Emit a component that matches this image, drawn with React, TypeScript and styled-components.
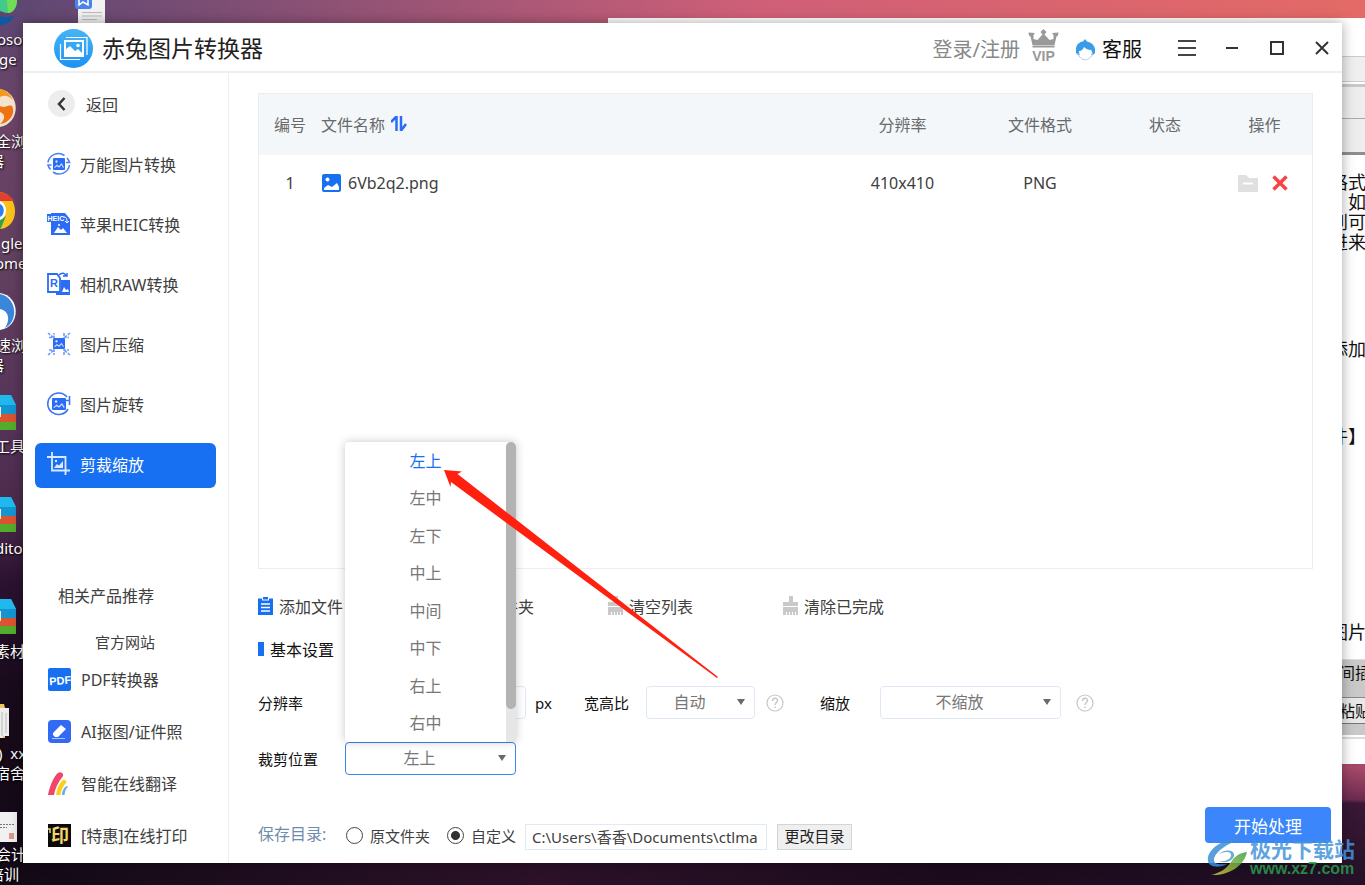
import React from "react";
import styled, { createGlobalStyle, css } from "styled-components";

const blue = "#1770f2";
const line = "#eeeff0";
const pale = "#dfe9f5";

const Global = createGlobalStyle`
  * { box-sizing: border-box; }
  body { margin: 0; }
  body, button, input, select {
    font-family: "Noto Sans", "Noto Sans CJK SC", sans-serif;
    font-size: 16px;
    color: #404040;
  }
  button { padding: 0; border: 0; background: none; cursor: pointer; }
  a { color: inherit; text-decoration: none; }
  svg { display: block; flex: none; }
`;

/* ---------- Desktop ---------- */

const Desktop = styled.div`
  position: relative;
  display: grid;
  min-height: 100vh;
  padding: 23px 23px 22px;
  overflow: hidden;
  background:
    linear-gradient(90deg, #51497400 0%, #cf5f78 55%, #e36a66 100%) top / 100% 24px no-repeat,
    linear-gradient(#a04468, #a84a6a 3%, #6d2a50 30%, #3a1836 33%, #241026) right bottom / 24px 122px no-repeat,
    linear-gradient(90deg, #120a16, #2c1128 40%, #1b0b1c 70%, #221026) bottom / 100% 22px no-repeat,
    linear-gradient(#5a4773 0%, #6c4468 12%, #62405f 30%, #553359 48%, #4b2a4b 58%, #2a1230 66%, #180b1b 78%, #130916 100%);
`;

const Shortcut = styled.div<{ $top: number; $left?: number }>`
  position: absolute;
  top: ${(p) => p.$top}px;
  left: ${(p) => p.$left ?? 0}px;
`;

const Caption = styled.span<{ $top: number; $left: number }>`
  position: absolute;
  top: ${(p) => p.$top - 11}px;
  left: ${(p) => p.$left}px;
  line-height: 20px;
  font-size: 15px;
  color: #fff;
  white-space: pre;
  text-shadow: 1px 1px 2px #000;
`;

/* ---------- Window behind ---------- */

const BackWindow = styled.div`
  position: absolute;
  top: 18px;
  left: 608px;
  right: 0;
  bottom: 121px;
  display: flex;
  flex-direction: column;
  align-items: flex-end;
  overflow: hidden;
  background: #fff;
`;

const Strip = styled.div<{ $h: number; $bg?: string; $edge?: string }>`
  flex: none;
  width: 36px;
  height: ${(p) => p.$h}px;
  background: ${(p) => p.$bg ?? "#fff"};
  border-bottom: ${(p) => p.$edge ?? "0 solid"};
`;

const Paper = styled(Strip)`
  padding-left: 1px;
  font-size: 18px;
  line-height: 20px;
  color: #111;
  white-space: pre;
  overflow: hidden;
`;

const SmallText = styled(Strip)`
  padding-left: 10px;
  font-size: 16px;
  line-height: 26px;
  color: #111;
  white-space: nowrap;
  overflow: hidden;
`;

/* ---------- Application window ---------- */

const Window = styled.div`
  position: relative;
  display: grid;
  grid-template-rows: 50px 1fr;
  min-width: 1180px;
  background: #fff;
  box-shadow: 0 0 12px rgba(0, 0, 0, 0.35);
`;

const TitleBar = styled.header`
  display: flex;
  align-items: center;
  padding: 2px 0 0 31px;
  border-bottom: 2px solid ${line};
`;

const AppTitle = styled.h1`
  margin: 0 auto 0 9px;
  font-size: 23px;
  line-height: 32px;
  font-weight: 400;
  color: #222;
`;

const Login = styled.button`
  margin-right: 8px;
  padding-top: 3px;
  font-size: 20px;
  line-height: 28px;
  color: #888;
`;

const Vip = styled.button`
  display: flex;
  flex-direction: column;
  align-items: center;
  width: 31px;
  margin: -6px 17px 0 0;
  font: 700 14px/12px "Liberation Sans", sans-serif;
  color: #999;
`;

const Service = styled.button`
  display: flex;
  align-items: center;
  gap: 7px;
  margin-right: 25px;
  padding-top: 3px;
  font-size: 20px;
  line-height: 28px;
  color: #111;
`;

const WindowButtons = styled.div`
  display: flex;
  gap: 5px;
`;

const WindowButton = styled.button`
  display: grid;
  place-items: center;
  width: 40px;
  height: 40px;
`;

const Body = styled.div`
  display: grid;
  grid-template-columns: 206px 1fr;
`;

/* ---------- Sidebar ---------- */

const Sidebar = styled.aside`
  display: flex;
  flex-direction: column;
  padding: 17px 12px 0;
  border-right: 1px solid ${line};
`;

const Back = styled.button`
  display: flex;
  align-items: center;
  gap: 11px;
  height: 27px;
  margin: 0 0 26px 13px;
`;

const BackCircle = styled.span`
  display: grid;
  place-items: center;
  width: 27px;
  height: 27px;
  border-radius: 50%;
  background: #ededed;
`;

const Nav = styled.nav`
  display: flex;
  flex-direction: column;
  gap: 15px;
`;

const NavItem = styled.button<{ $active?: boolean }>`
  display: flex;
  align-items: center;
  gap: 9px;
  height: 45px;
  padding: 0 0 3px 12px;
  border-radius: 6px;
  ${(p) => p.$active && css`background: ${blue}; color: #fff;`}
`;

const Related = styled.h2`
  margin: auto 0 23px 23px;
  font-size: 16px;
  line-height: 24px;
  font-weight: 400;
`;

const Site = styled.a`
  margin-left: 60px;
  font-size: 15px;
  line-height: 22px;
`;

const Products = styled.div`
  display: flex;
  flex-direction: column;
  padding-bottom: 2px;
`;

const Product = styled.a`
  display: flex;
  align-items: center;
  gap: 10px;
  height: 52px;
  padding-left: 13px;
  white-space: nowrap;
`;

/* ---------- Main pane ---------- */

const Main = styled.main`
  display: flex;
  flex-direction: column;
  min-width: 0;
  padding-top: 20px;
`;

const Work = styled.div`
  flex: 1;
  display: flex;
  flex-direction: column;
  padding: 0 29px;
`;

const FilePane = styled.div`
  flex: 1;
  min-height: 220px;
  border: 1px solid #ebedee;
`;

const Files = styled.table`
  width: 100%;
  table-layout: fixed;
  border-collapse: collapse;
`;

const Th = styled.th<{ $w?: number; $left?: boolean }>`
  width: ${(p) => (p.$w ? `${p.$w}px` : "auto")};
  height: 61px;
  padding: 0 0 2px;
  background: #f3f7fa;
  font-weight: 400;
  color: #6a6a6a;
  text-align: ${(p) => (p.$left ? "left" : "center")};
`;

const Td = styled.td`
  height: 56px;
  padding: 0;
  text-align: center;
`;

const Inline = styled.span<{ $gap: number; $center?: boolean }>`
  display: flex;
  align-items: center;
  justify-content: ${(p) => (p.$center ? "center" : "flex-start")};
  gap: ${(p) => p.$gap}px;
  padding-right: ${(p) => (p.$center ? 4 : 0)}px;
`;

const Toolbar = styled.div`
  display: grid;
  grid-template-columns: repeat(4, 175px);
  height: 28px;
  margin-top: 23px;
`;

const Tool = styled.button`
  display: flex;
  align-items: center;
  gap: 5px;
`;

const Section = styled.h2`
  display: flex;
  align-items: center;
  gap: 6px;
  height: 20px;
  margin: 19px 0 0;
  font-size: 16px;
  font-weight: 400;
  color: #111;
  &::before {
    content: "";
    width: 6px;
    height: 14px;
    background: ${blue};
  }
`;

const SettingRow = styled.div<{ $top: number }>`
  display: flex;
  align-items: center;
  height: 33px;
  margin-top: ${(p) => p.$top}px;
`;

const Field = styled.div<{ $gap: number; $before?: number }>`
  display: flex;
  align-items: center;
  gap: ${(p) => p.$gap}px;
  margin-left: ${(p) => p.$before ?? 0}px;
`;

const Label = styled.label<{ $w?: number }>`
  width: ${(p) => (p.$w ? `${p.$w}px` : "auto")};
  font-size: 15px;
  line-height: 22px;
  color: #111;
`;

const SizeInput = styled.input`
  width: 86px;
  height: 33px;
  border: 1px solid ${pale};
  border-radius: 4px;
  outline: 0;
`;

const Picker = styled.div<{ $w: number }>`
  position: relative;
  width: ${(p) => p.$w}px;
`;

const Select = styled.select<{ $open?: boolean }>`
  display: block;
  appearance: none;
  width: 100%;
  height: 33px;
  padding: 0 22px 2px 0;
  border: 1px solid ${(p) => (p.$open ? "#3a84f5" : pale)};
  border-radius: 4px;
  background: #fff;
  color: #777;
  text-align-last: center;
  outline: 0;
`;

const Caret = styled.svg`
  position: absolute;
  top: 13px;
  right: 10px;
  pointer-events: none;
`;

const Help = styled.button`
  display: grid;
  place-items: center;
`;

const Dropdown = styled.div`
  position: absolute;
  left: 0;
  bottom: 33px;
  width: 100%;
  height: 300px;
  display: grid;
  grid-template-columns: 1fr 10px;
  border-radius: 4px;
  background: #fff;
  box-shadow: 0 0 10px rgba(0, 0, 0, 0.22);
`;

const Options = styled.div`
  display: grid;
  grid-auto-rows: 1fr;
`;

const Option = styled.button<{ $on: boolean }>`
  padding-bottom: 2px;
  color: ${(p) => (p.$on ? blue : "#777")};
`;

const Track = styled.div`
  border-radius: 5px 5px 0 0;
  background: #e6e6e6;
`;

const Thumb = styled.div`
  height: 267px;
  border-radius: 5px;
  background: #b3b3b3;
`;

const Pointer = styled.svg`
  position: absolute;
  left: 98px;
  top: 27px;
  overflow: visible;
  pointer-events: none;
`;

const Footer = styled.footer`
  display: flex;
  align-items: flex-start;
  justify-content: space-between;
  margin-top: 32px;
  padding: 0 11px 13px 29px;
`;

const SaveBar = styled.fieldset`
  display: flex;
  align-items: center;
  height: 26px;
  margin: 17px 0 0;
  padding: 0;
  border: 0;
`;

const SaveTitle = styled.span`
  width: 88px;
  padding-bottom: 9px;
  color: #6f8cab;
`;

const RadioLabel = styled.label<{ $after: number }>`
  display: flex;
  align-items: center;
  gap: 7px;
  margin-right: ${(p) => p.$after}px;
  padding-bottom: 3px;
  font-size: 15px;
`;

const Radio = styled.input`
  appearance: none;
  width: 17px;
  height: 17px;
  margin: 0;
  border: 1px solid #444;
  border-radius: 50%;
  &:checked {
    background: radial-gradient(circle, #333 4px, transparent 5px);
  }
`;

const PathInput = styled.input`
  width: 242px;
  height: 26px;
  padding: 0 6px 2px;
  border: 1px solid #dfeaf5;
  font-size: 15px;
  outline: 0;
`;

const ChangeDir = styled.button`
  width: 75px;
  height: 26px;
  margin-left: 10px;
  padding-bottom: 2px;
  border: 1px solid #d5d5d5;
  background: #efefef;
  font-size: 15px;
  line-height: 22px;
  color: #222;
`;

const Start = styled.button`
  width: 126px;
  height: 36px;
  border-radius: 4px;
  background: #3a86fa;
  font-size: 17px;
  color: #fff;
`;

const Watermark = styled.div`
  position: absolute;
  right: 10px;
  bottom: 7px;
  display: flex;
  align-items: center;
  gap: 2px;
  opacity: 0.85;
  pointer-events: none;
`;

const MarkText = styled.div`
  display: flex;
  flex-direction: column;
  font: 700 21px/24px "Noto Sans CJK SC", sans-serif;
  color: #4493dc;
`;

const MarkUrl = styled.span`
  font: 700 16px/18px "Liberation Sans", sans-serif;
  color: #2a9a4c;
`;

/* ---------- Drawings ---------- */

const Logo = () => (
  <svg width="39" height="39" viewBox="0 0 39 39">
    <defs>
      <linearGradient id="lg" x1="0" y1="0" x2="0" y2="1">
        <stop offset="0" stopColor="#46b5f6" />
        <stop offset="1" stopColor="#1c92f5" />
      </linearGradient>
    </defs>
    <circle cx="19.500" cy="19.500" r="19.500" fill="url(#lg)" />
    <g fill="none" stroke="#fff">
      <path d="M12 8.500H33V26" strokeWidth="1.200" />
      <path d="M6.500 15V30.500H26" strokeWidth="1.200" />
      <rect x="11" y="12" width="18" height="15" strokeWidth="2" />
    </g>
    <path d="M12 25V20l4-3 5 5 3-2 4 4v2H12z" fill="#fff" />
    <circle cx="24" cy="16.500" r="1.800" fill="#fff" />
  </svg>
);

const Crown = () => (
  <svg width="31" height="21" viewBox="0 0 31 21" fill="#999">
    <path d="M15.500 0l3 3-2 2.500 5 5.500 4-1V6l-1.500-2 6.500-.5-.5 3-1.500 1-2 8.500h-22L2.500 7.500 1 6.500.5 3.500 7 4 5.500 6v4l4 1 5-5.500-2-2.500z" />
    <rect x="4.500" y="16.500" width="22" height="2" />
  </svg>
);

const ServiceIcon = () => (
  <svg width="19" height="22" viewBox="0 0 19 22">
    <path d="M0 14C-1 6 3 3 7 2.500L9 0l2 2.500c6 1 9 6 8 11.500l-2 2H2z" fill="#3a9be9" />
    <path d="M3 12c3 0 4-2 5-4 2 2 4 3 7 3 1 1 1 2 1 3-1 4-4 6-7 6s-6-3-6-8z" fill="#fff" />
    <path d="M2 14c2 9 12 9 15 0" fill="none" stroke="#a9cdf7" strokeWidth="1" />
  </svg>
);

const Picture = ({ x, y, w, h }: { x: number; y: number; w: number; h: number }) => (
  <svg x={x} y={y} width={w} height={h} viewBox="0 0 12 10" preserveAspectRatio="none">
    <rect width="12" height="10" rx="1" fill="#2b6cf6" />
    <circle cx="3.500" cy="3" r="1.100" fill="#cfe0ff" />
    <path d="M1.500 8l2.500-2 2 1.500L8.500 5l2 3" fill="none" stroke="#cfe0ff" />
  </svg>
);

const navIcons: Record<string, React.ReactNode> = {
  all: (
    <>
      <path d="M1 10.500a10.500 10.500 0 0 1 16.500-7M20 6a10.500 10.500 0 0 1 2.500 4.500H19M22.500 13a10.500 10.500 0 0 1-16.500 7M3.500 17.500A10.500 10.500 0 0 1 1 13h3.500" fill="none" stroke="#4a7ff8" strokeWidth="1.600" />
      <Picture x={6} y={6} w={12} h={12} />
    </>
  ),
  heic: (
    <>
      <path d="M4 1h14l5 6v16H4z" fill="#2b6cf6" />
      <rect y="2" width="18" height="8" fill="#2b6cf6" />
      <text x="0.500" y="9" fontSize="7" fontWeight="700" fontFamily="Liberation Sans" fill="#fff">HEIC</text>
      <path d="M17 5c3 0 3 3 3 6M18 9l2 2 2-2" fill="none" stroke="#fff" />
      <path d="M7 21l4-6 3 3 2-2 4 5z" fill="#fff" />
      <circle cx="12" cy="13" r="1" fill="#fff" />
    </>
  ),
  raw: (
    <>
      <path d="M14 8h9v15H9v-3h5z" fill="#2b6cf6" />
      <path d="M1 2h9l3 4v14H1z" fill="#fff" stroke="#2b6cf6" strokeWidth="1.800" />
      <text x="3" y="15" fontSize="11" fontWeight="700" fontFamily="Liberation Sans" fill="#2b6cf6">R</text>
      <path d="M12 3c3-3 6-2 7 1m-3 0h4V1" fill="none" stroke="#2b6cf6" strokeWidth="1.500" />
      <path d="M15 20l2-5 2 3 2-1 1 3z" fill="#fff" />
    </>
  ),
  shrink: (
    <>
      <Picture x={6} y={6} w={12} h={11} />
      <path d="M1 1l6 5M2 5.500h5V1M23 1l-6 5M17 1v4.500h5M1 23l6-5M2 18h5v5M23 23l-6-5M17 23v-5h5" fill="none" stroke="#6f9bf9" strokeWidth="1.600" strokeDasharray="3 1" />
    </>
  ),
  rotate: (
    <>
      <path d="M20 5A10.800 10.800 0 1 0 21 17M22.500 13V4M22.500 8.500h-3.500" fill="none" stroke="#3b74f7" strokeWidth="1.600" />
      <Picture x={5} y={6} w={14} h={12} />
    </>
  ),
  crop: (
    <>
      <path d="M5 0v18.500h18M0 5h18.500v18" fill="none" stroke="#dce9ff" strokeWidth="1.800" />
      <path d="M7 16l3-4 2 1.500L16 9v7z" fill="#dce9ff" />
      <circle cx="9" cy="9" r="1.200" fill="#dce9ff" />
    </>
  ),
};

const NavIcon = ({ name }: { name: string }) => (
  <svg width="24" height="24" viewBox="0 0 24 24">{navIcons[name]}</svg>
);

const productIcons: React.ReactNode[] = [
  <>
    <rect width="23" height="23" rx="2" fill={blue} />
    <text x="1" y="16.500" fontSize="11" fontWeight="700" fontFamily="Liberation Sans" fill="#fff" transform="rotate(-4 11 11)">PDF</text>
  </>,
  <>
    <rect width="23" height="23" rx="4" fill="#336af3" />
    <path d="M5 13l8-8 5 4-8 8H7l-2-2z" fill="#fff" />
    <path d="M4 18.500h13" stroke="#a9c3fb" />
  </>,
  <>
    <path d="M0 23C2 12 7 3 10 1c2-2 6 0 5 3C10 10 7 17 6 23z" fill="#f2456c" />
    <path d="M8 23c1-7 4-13 7-15 2-1 4 1 3 3-3 3-5 8-5.500 12z" fill="#fdd017" />
    <path d="M14 23c0-4 2-8 5-9 1 0 1 1 0 2-2 2-2 4-2.500 7z" fill="#64aef0" />
  </>,
  <>
    <rect width="23" height="23" fill="#0c0a08" />
    <text x="3" y="18" fontSize="18" fontWeight="700" fontFamily="Noto Sans CJK SC" fill="#f5d668">印</text>
    <path d="M0 5h2v4" fill="none" stroke="#f5d668" strokeWidth="1.500" />
  </>,
];

const Clipboard = () => (
  <svg width="16" height="18" viewBox="0 0 16 18">
    <path d="M0 1.500h4v2h7v-2h4V18H0zM5 0h5v2.500H5z" fill={blue} />
    <path d="M3 7h9M3 10.500h9M3 14h9" stroke="#fff" strokeWidth="1.300" />
  </svg>
);

const Broom = () => (
  <svg width="16" height="20" viewBox="0 0 16 20" fill="#c9c9c9">
    <path d="M6 0h4v6h5v4H0V6h6zM0 11h15v8h-2v-3h-1v3h-2v-3H9v3H7v-3H6v3H4v-3H3v3H0z" />
  </svg>
);

const HelpIcon = () => (
  <svg width="18" height="18" viewBox="0 0 18 18" fill="none" stroke="#c6c6c6" strokeWidth="1.200">
    <circle cx="9" cy="9" r="8" />
    <path d="M6.500 7c0-3.500 5-3.500 5-.5C11.500 8.500 9 8.500 9 11M9 12.500V14" strokeWidth="1.400" />
  </svg>
);

const Archive = () => (
  <svg width="16" height="36" viewBox="0 0 16 36">
    <path d="M0 0h11l5 10v9H0z" fill="#1495d0" />
    <path d="M0 0h11l5 10H0z" fill="#20b9ee" />
    <rect y="19" width="16" height="8" fill="#dc5330" />
    <rect y="27" width="16" height="8" fill="#53ac2c" />
    <path d="M0 12h1v10H0z" fill="#eee" />
  </svg>
);

/* ---------- Data ---------- */

const captions: [string, number, number][] = [
  ["osoft", 40, -3], ["ge", 60, -1],
  ["全浏", 142, -4], ["器", 162, -11],
  ["gle", 244, 1], ["ome", 264, -5],
  ["速浏", 346, -4], ["器", 366, -11],
  ["工具", 447, -5], ["ditor", 549, -5], ["素材", 652, -5],
  [")  xx", 754, -2], ["宿舍", 774, -5],
  ["会计", 855, -4], ["培训", 875, -11],
];

const navItems = [
  ["all", "万能图片转换"],
  ["heic", "苹果HEIC转换"],
  ["raw", "相机RAW转换"],
  ["shrink", "图片压缩"],
  ["rotate", "图片旋转"],
  ["crop", "剪裁缩放"],
];

const products = ["PDF转换器", "AI抠图/证件照", "智能在线翻译", "[特惠]在线打印"];
const positions = ["左上", "左中", "左下", "中上", "中间", "中下", "右上", "右中"];

const CaretIcon = () => (
  <Caret width="8" height="6" viewBox="0 0 8 6"><path d="M0 0h8L4 6z" fill="#6a6a6a" /></Caret>
);

export default function App() {
  return (
    <Desktop>
      <Global />
      <Shortcut $top={0}>
        <svg width="18" height="27" viewBox="0 0 18 27">
          <path d="M0 0h17c0 8-5 14-11 13L0 11z" fill="#43c98a" />
          <path d="M7 0h10c0 8-5 14-9 13z" fill="#70dd55" />
          <path d="M0 16c5 2 9 1 14 0-3 6-8 9-14 9z" fill="#0c5aa5" />
        </svg>
      </Shortcut>
      <Shortcut $top={0} $left={75}>
        <svg width="30" height="24" viewBox="0 0 30 24">
          <rect x="3" width="27" height="24" fill="#f2f2f2" />
          <path d="M0 0h17v6q0 3-3 3H3Q0 9 0 6z" fill="#4a83ee" />
          <path d="M4 0v5l4-3 5 3V0" fill="none" stroke="#fff" strokeWidth="1.500" />
          <path d="M7 12.500h20M7 16h20M7 19.500h15" stroke="#bbb" />
        </svg>
      </Shortcut>
      <Shortcut $top={89}>
        <svg width="16" height="38" viewBox="0 0 16 38">
          <path d="M0 0c21 4 21 34 0 38z" fill="#f3e3cf" />
          <path d="M0 0c6 1 11 6 13 11C8 6 4 6 0 8z" fill="#f39a1c" />
          <path d="M0 17c5 3 8-2 12 0 4 8-3 17-12 18 5-4 6-10 0-12z" fill="#ef7313" />
        </svg>
      </Shortcut>
      <Shortcut $top={192}>
        <svg width="16" height="37" viewBox="0 0 16 37">
          <path d="M0 0c19 2 21 35 0 37z" fill="#fbc21d" />
          <path d="M0 0c7 1 12 5 14 9H0z" fill="#e2402f" />
          <path d="M0 28l6-4-5 12-1 1z" fill="#2da44e" />
          <path d="M0 9c8 3 8 16 0 19z" fill="#fff" />
          <path d="M0 12c5 2 5 11 0 13z" fill="#2f7ff0" />
        </svg>
      </Shortcut>
      <Shortcut $top={293}>
        <svg width="16" height="37" viewBox="0 0 16 37">
          <path d="M0 0c21 3 21 34 0 37z" fill="#fff" />
          <path d="M0 1c18 4 18 28 5 34 6-10 3-17-5-19z" fill="#3b86dc" />
        </svg>
      </Shortcut>
      {[395, 497, 599].map((top) => (
        <Shortcut key={top} $top={top}><Archive /></Shortcut>
      ))}
      <Shortcut $top={704}>
        <svg width="10" height="36" viewBox="0 0 10 36">
          <path d="M0 0h4l1 4v30H0z" fill="#efc75e" />
          <path d="M0 4h9v28H3v2H0z" fill="#eee" />
          <path d="M2 8v24M6 9v20" stroke="#bbb" />
        </svg>
      </Shortcut>
      <Shortcut $top={812}>
        <svg width="17" height="30" viewBox="0 0 17 30">
          <rect width="17" height="30" fill="#f1f1f1" />
          <path d="M0 12.500h14M0 15.500h7" stroke="#777" strokeDasharray="2 1" />
          <rect x="9" y="21" width="5" height="6" fill="#d79c8c" />
        </svg>
      </Shortcut>
      {captions.map(([text, top, left]) => (
        <Caption key={top} $top={top} $left={left}>{text}</Caption>
      ))}

      <BackWindow>
        <Strip $h={39} $edge="1px solid #ccc" />
        <Strip $h={25} $bg="#efefef" $edge="1px solid #ccc" />
        <Strip $h={5} $edge="3px solid #c8c8c8" />
        <Strip $h={32} $bg="#ededed" $edge="1px solid #aaa" />
        <Strip $h={36} $bg="#ededed" $edge="3px solid #8e8e8e" />
        <Strip $h={17} />
        <Paper $h={80}>{"格式\n　如\n到可\n进来"}</Paper>
        <Strip $h={87} />
        <Paper $h={20}>添加</Paper>
        <Strip $h={67} />
        <Paper $h={20}>件】</Paper>
        <Strip $h={176} />
        <Paper $h={20}>图片</Paper>
        <Strip $h={18} $edge="1px solid #ddd" />
        <SmallText $h={38} $bg="#c9c9c9" $edge="1px solid #888">间插</SmallText>
        <SmallText $h={26} $bg="#e8e8e8" $edge="1px solid #777">粘贴</SmallText>
        <Strip $h={11} $bg="#c9c9c9" />
        <Strip $h={4} $edge="2px solid #ddd" />
      </BackWindow>

      <Window>
        <TitleBar>
          <Logo />
          <AppTitle>赤兔图片转换器</AppTitle>
          <Login>登录/注册</Login>
          <Vip><Crown />VIP</Vip>
          <Service><ServiceIcon />客服</Service>
          <WindowButtons>
            <WindowButton aria-label="菜单">
              <svg width="18" height="16" viewBox="0 0 18 16"><path d="M0 1h18M0 8h18M0 15h18" stroke="#444" strokeWidth="2" /></svg>
            </WindowButton>
            <WindowButton aria-label="最小化">
              <svg width="12" height="2" viewBox="0 0 12 2"><path d="M0 1h12" stroke="#333" strokeWidth="2" /></svg>
            </WindowButton>
            <WindowButton aria-label="最大化">
              <svg width="14" height="14" viewBox="0 0 14 14"><path d="M1 1h12v12H1z" fill="none" stroke="#333" strokeWidth="2" /></svg>
            </WindowButton>
            <WindowButton aria-label="关闭">
              <svg width="14" height="14" viewBox="0 0 14 14"><path d="M1 1l12 12M13 1L1 13" stroke="#333" strokeWidth="2" /></svg>
            </WindowButton>
          </WindowButtons>
        </TitleBar>

        <Body>
          <Sidebar>
            <Back>
              <BackCircle>
                <svg width="9" height="14" viewBox="0 0 9 14"><path d="M7.500 1L2 7l5.500 6" fill="none" stroke="#333" strokeWidth="2.500" /></svg>
              </BackCircle>
              返回
            </Back>
            <Nav>
              {navItems.map(([icon, text]) => (
                <NavItem key={icon} $active={icon === "crop"}><NavIcon name={icon} />{text}</NavItem>
              ))}
            </Nav>
            <Related>相关产品推荐</Related>
            <Site href="#site">官方网站</Site>
            <Products>
              {products.map((text, i) => (
                <Product key={text} href="#product">
                  <svg width="23" height="23" viewBox="0 0 23 23">{productIcons[i]}</svg>
                  {text}
                </Product>
              ))}
            </Products>
          </Sidebar>

          <Main>
            <Work>
              <FilePane>
                <Files>
                  <thead>
                    <tr>
                      <Th $w={62}>编号</Th>
                      <Th $left>
                        <Inline $gap={6}>
                          文件名称
                          <svg width="16" height="16" viewBox="0 0 16 16"><path d="M0 6L5 1M5.500 0v15M10 0v15M10.500 14L15 8" fill="none" stroke="#2b6cf6" strokeWidth="2.500" /></svg>
                        </Inline>
                      </Th>
                      <Th $w={129}>分辨率</Th>
                      <Th $w={146}>文件格式</Th>
                      <Th $w={104}>状态</Th>
                      <Th $w={95}>操作</Th>
                    </tr>
                  </thead>
                  <tbody>
                    <tr>
                      <Td>1</Td>
                      <Td>
                        <Inline $gap={7}>
                          <svg width="20" height="20" viewBox="0 0 20 20">
                            <rect x="1" y="1" width="19" height="18" rx="2" fill={blue} />
                            <circle cx="6.500" cy="6.500" r="2" fill="#fff" />
                            <path d="M3 17v-2l4-3 4 2 5-4 2 4v3z" fill="#fff" />
                          </svg>
                          6Vb2q2.png
                        </Inline>
                      </Td>
                      <Td>410x410</Td>
                      <Td>PNG</Td>
                      <Td />
                      <Td>
                        <Inline $gap={14} $center>
                          <svg width="20" height="19" viewBox="0 0 20 19">
                            <path d="M0 1h8l3 3h9v14H0z" fill="#e0e0e0" />
                            <path d="M5 9.500h10" stroke="#fff" strokeWidth="2" />
                          </svg>
                          <svg width="16" height="16" viewBox="0 0 16 16"><path d="M1.500 1.500l13 13M14.500 1.500l-13 13" stroke="#fa4444" strokeWidth="3.500" /></svg>
                        </Inline>
                      </Td>
                    </tr>
                  </tbody>
                </Files>
              </FilePane>

              <Toolbar>
                <Tool><Clipboard />添加文件</Tool>
                <Tool><Clipboard />添加文件夹</Tool>
                <Tool><Broom />清空列表</Tool>
                <Tool><Broom />清除已完成</Tool>
              </Toolbar>

              <Section>基本设置</Section>

              <SettingRow $top={27}>
                <Label $w={87} htmlFor="width">分辨率</Label>
                <Field $gap={9}>
                  <SizeInput id="width" />
                  <SizeInput aria-label="高度" />
                  <Label as="span">px</Label>
                </Field>
                <Field $gap={17} $before={32}>
                  <Label htmlFor="ratio">宽高比</Label>
                  <Picker $w={109}>
                    <Select id="ratio"><option>自动</option></Select>
                    <CaretIcon />
                  </Picker>
                </Field>
                <Field $gap={0} $before={11}><Help aria-label="宽高比说明"><HelpIcon /></Help></Field>
                <Field $gap={30} $before={36}>
                  <Label htmlFor="scale">缩放</Label>
                  <Picker $w={181}>
                    <Select id="scale"><option>不缩放</option></Select>
                    <CaretIcon />
                  </Picker>
                </Field>
                <Field $gap={0} $before={15}><Help aria-label="缩放说明"><HelpIcon /></Help></Field>
              </SettingRow>

              <SettingRow $top={23}>
                <Label $w={87} htmlFor="position">裁剪位置</Label>
                <Picker $w={171}>
                  <Select id="position" $open><option>左上</option></Select>
                  <CaretIcon />
                  <Dropdown>
                    <Options>
                      {positions.map((text, i) => (
                        <Option key={text} $on={i === 0}>{text}</Option>
                      ))}
                    </Options>
                    <Track><Thumb /></Track>
                    <Pointer width="276" height="210" viewBox="0 0 276 210">
                      <path d="M1 1l18 1.500-4.500 2.500L275 208l-1 1L8 13l-.5 5z" fill="#ff2010" />
                    </Pointer>
                  </Dropdown>
                </Picker>
              </SettingRow>
            </Work>

            <Footer>
              <SaveBar>
                <SaveTitle>保存目录:</SaveTitle>
                <RadioLabel $after={17}><Radio type="radio" name="dir" />原文件夹</RadioLabel>
                <RadioLabel $after={9}><Radio type="radio" name="dir" defaultChecked />自定义</RadioLabel>
                <PathInput aria-label="保存路径" defaultValue="C:\Users\香香\Documents\ctlma" />
                <ChangeDir>更改目录</ChangeDir>
              </SaveBar>
              <Start>开始处理</Start>
            </Footer>
          </Main>
        </Body>
      </Window>

      <Watermark>
        <svg width="41" height="38" viewBox="0 0 41 38">
          <defs>
            <linearGradient id="wm" x1="0" y1="1" x2="1" y2="0">
              <stop offset="0" stopColor="#d8c83c" />
              <stop offset="1" stopColor="#38a04a" />
            </linearGradient>
          </defs>
          <path d="M38 0C16-1-1 12 1 23c1 7 12 7 19 3-8 1-13 0-13-4C7 14 22 4 38 0z" fill="#3d8fd8" />
          <path d="M12 16c6-3 13-3 12 2-1 4-7 6-12 5 5 3 14 0 15-5 1-6-8-8-15-2z" fill="#4ca0d0" />
          <path d="M40 14c-8 1-12 4-16 10-5 7-11 11-20 13 16 1 33-8 36-23z" fill="url(#wm)" />
        </svg>
        <MarkText>极光下载站<MarkUrl>www.xz7.com</MarkUrl></MarkText>
      </Watermark>
    </Desktop>
  );
}
